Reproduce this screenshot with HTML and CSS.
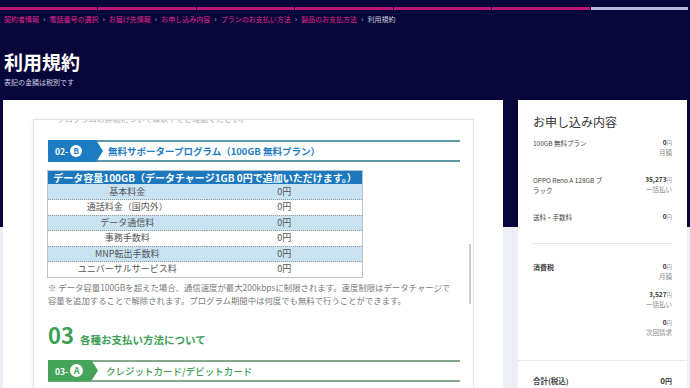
FILE: index.html
```html
<!DOCTYPE html>
<html lang="ja">
<head>
<meta charset="utf-8">
<title>利用規約</title>
<link rel="stylesheet" href="styles.css">
</head>
<body>
<header class="hero">
  <div class="progress">
    <span class="seg done"></span>
    <span class="seg done"></span>
    <span class="seg done"></span>
    <span class="seg done"></span>
    <span class="seg done"></span>
    <span class="seg done"></span>
    <span class="seg"></span>
  </div>
  <nav class="crumbs">
    <span class="crumb">契約者情報</span><span class="sep">›</span>
    <span class="crumb">電話番号の選択</span><span class="sep">›</span>
    <span class="crumb">お届け先情報</span><span class="sep">›</span>
    <span class="crumb">お申し込み内容</span><span class="sep">›</span>
    <span class="crumb">プランのお支払い方法</span><span class="sep">›</span>
    <span class="crumb">製品のお支払方法</span><span class="sep">›</span>
    <span class="crumb current">利用規約</span>
  </nav>
  <h1 class="title">利用規約</h1>
  <p class="subtitle">表記の金額は税別です</p>
</header>

<div class="layout">
  <main class="main-card">
    <div class="terms">
      <div class="cut"><p>プログラムの詳細については以下をご確認ください。</p></div>

      <div class="banner blue">
        <div class="tab"><span class="num">02-</span><span class="badge">B</span></div>
        <span class="banner-title">無料サポータープログラム（100GB 無料プラン）</span>
      </div>

      <table class="fees">
        <thead>
          <tr><th colspan="2">データ容量100GB（データチャージ1GB 0円で追加いただけます。）</th></tr>
        </thead>
        <tbody>
          <tr><td class="c1">基本料金</td><td>0円</td></tr>
          <tr><td class="c1">通話料金（国内外）</td><td>0円</td></tr>
          <tr><td class="c1">データ通信料</td><td>0円</td></tr>
          <tr><td class="c1">事務手数料</td><td>0円</td></tr>
          <tr><td class="c1">MNP転出手数料</td><td>0円</td></tr>
          <tr><td class="c1">ユニバーサルサービス料</td><td>0円</td></tr>
        </tbody>
      </table>

      <p class="note">※ データ容量100GBを超えた場合、通信速度が最大200kbpsに制限されます。速度制限はデータチャージで<br>容量を追加することで解除されます。プログラム期間中は何度でも無料で行うことができます。</p>

      <h2 class="section"><span class="sec-num">03</span><span class="sec-title">各種お支払い方法について</span></h2>

      <div class="banner green">
        <div class="tab"><span class="num">03-</span><span class="badge">A</span></div>
        <span class="banner-title">クレジットカード/デビットカード</span>
      </div>

      <div class="scroll-thumb"></div>
    </div>
  </main>

  <aside class="summary">
    <h3 class="sum-title">お申し込み内容</h3>
    <div class="items">
      <div class="row">
        <span class="label">100GB 無料プラン</span>
        <div class="price"><span class="amt"><b>0</b><small>円</small></span><span class="kind">月額</span></div>
      </div>
      <div class="row">
        <span class="label">OPPO Reno A 128GB ブ<br>ラック</span>
        <div class="price"><span class="amt"><b>35,273</b><small>円</small></span><span class="kind">一括払い</span></div>
      </div>
      <div class="row">
        <span class="label">送料・手数料</span>
        <div class="price"><span class="amt"><b>0</b><small>円</small></span></div>
      </div>
    </div>
    <div class="tax">
      <span class="label strong">消費税</span>
      <div class="prices">
        <div class="price"><span class="amt"><b>0</b><small>円</small></span><span class="kind">月額</span></div>
        <div class="price"><span class="amt"><b>3,527</b><small>円</small></span><span class="kind">一括払い</span></div>
        <div class="price"><span class="amt"><b>0</b><small>円</small></span><span class="kind">次回請求</span></div>
      </div>
    </div>
    <div class="total">
      <span class="label total-label">合計(税込)</span>
      <div class="price"><span class="amt big"><b>0</b><small>円</small></span><span class="kind">月額</span></div>
    </div>
  </aside>
</div>
</body>
</html>
```

FILE: styles.css
```css
* {
  box-sizing: border-box;
  margin: 0;
  padding: 0;
}

html,
body {
  width: 690px;
  height: 388px;
  overflow: hidden;
}

body {
  background: linear-gradient(#07053a 0, #07053a 227px, #eeeef6 227px);
  font-family: "Noto Sans CJK JP", "Noto Sans", sans-serif;
  color: #333;
}

/* ---------- header ---------- */
.hero {
  padding-top: 7px;
}

.progress {
  display: grid;
  grid-template-columns: repeat(7, 1fr);
  gap: 1px;
  width: 688px;
  height: 3px;
}

.seg {
  background: #b4b6dc;
}

.seg.done {
  background: #b91877;
}

.crumbs {
  display: flex;
  align-items: center;
  margin-top: 4px;
  padding-left: 4px;
  font-size: 7px;
  line-height: 10px;
  white-space: nowrap;
}

.crumb {
  color: #e2268e;
}

.crumb.current {
  color: #c8c8d8;
}

.sep {
  margin: 0 4px;
  color: #b0b0c4;
  font-size: 8px;
}

.title {
  margin-top: 26px;
  padding-left: 4px;
  font-size: 19px;
  line-height: 24px;
  font-weight: 700;
  color: #fff;
}

.subtitle {
  margin-top: 3px;
  padding-left: 4px;
  font-size: 7px;
  line-height: 10px;
  color: #d2d2e0;
}

/* ---------- layout ---------- */
.layout {
  display: flex;
  align-items: flex-start;
  gap: 15px;
  margin-top: 13px;
  padding-left: 3px;
}

.main-card {
  width: 500px;
  height: 300px;
  background: #fff;
  padding: 19px 29px 0 30px;
}

.terms {
  position: relative;
  height: 281px;
  overflow: hidden;
  border: 1px solid #e3e3e3;
  box-shadow: 0 0 3px rgba(0, 0, 0, 0.08);
  padding: 0 13px 0 14px;
}

.cut {
  height: 4px;
  overflow: hidden;
  padding-left: 9px;
}

.cut p {
  margin-top: -6px;
  font-size: 8px;
  line-height: 10px;
  color: #b0b0b0;
}

/* ---------- banners ---------- */
.banner {
  display: flex;
  align-items: center;
  height: 22px;
  border-top: 2px solid;
  border-bottom: 2px solid;
}

.banner.blue {
  margin-top: 16px;
  border-color: #5f97a8;
  --c: #1d7cc1;
}

.banner.green {
  margin-top: 8px;
  border-color: #86a98b;
  --c: #45a459;
}

.tab {
  align-self: stretch;
  margin: -2px 0;
  width: 55px;
  display: flex;
  align-items: center;
  padding-left: 7px;
  background: var(--c);
  clip-path: polygon(0 0, 48px 0, 55px 50%, 48px 100%, 0 100%);
}

.green .tab {
  width: 50px;
  padding-left: 7px;
  clip-path: polygon(0 0, 43px 0, 50px 50%, 43px 100%, 0 100%);
}

.num {
  color: #fff;
  font-size: 8.5px;
  font-weight: 700;
  line-height: 10px;
}

.badge {
  width: 12px;
  height: 12px;
  margin-left: 2px;
  border-radius: 50%;
  background: #fff;
  color: var(--c);
  font-size: 8px;
  font-weight: 700;
  line-height: 12px;
  text-align: center;
}

.green .badge {
  width: 13px;
  height: 13px;
  line-height: 13px;
  font-size: 8.5px;
}

.banner-title {
  margin-left: 5px;
  color: var(--c);
  font-size: 9.5px;
  font-weight: 700;
  line-height: 12px;
  white-space: nowrap;
}

.green .banner-title {
  margin-left: 8px;
  color: #3e9c51;
  font-weight: 500;
}

/* ---------- table ---------- */
.fees {
  margin-top: 8px;
  margin-left: -1px;
  width: 316px;
  border-collapse: collapse;
  border: 1px solid #b9c3ca;
  color: #555;
}

.fees th {
  height: 13px;
  padding: 0;
  background: #1b78bf;
  color: #fff;
  font-size: 10px;
  font-weight: 700;
  line-height: 13px;
  text-align: center;
  white-space: nowrap;
}

.fees td {
  height: 15.5px;
  padding: 0;
  font-size: 9px;
  line-height: 12px;
  text-align: center;
  border-bottom: 1px dotted #9a9a9a;
}

.fees .c1 {
  width: 159px;
}

.fees tbody tr:nth-child(odd) td {
  background: #c9e2f2;
}

.fees tbody tr:nth-child(even) td {
  background: #fff;
}

.note {
  margin-top: 3px;
  font-size: 8.4px;
  line-height: 13.5px;
  color: #7a7a7a;
  white-space: nowrap;
}

/* ---------- section heading ---------- */
.section {
  display: flex;
  align-items: baseline;
  margin-top: 14px;
  line-height: 24px;
}

.sec-num {
  font-size: 22px;
  font-weight: 700;
  color: #3d9f55;
}

.sec-title {
  margin-left: 6px;
  font-size: 10.5px;
  font-weight: 700;
  color: #3d9f55;
}

.scroll-thumb {
  position: absolute;
  right: 2px;
  top: 124px;
  width: 2px;
  height: 60px;
  background: #cdcdcd;
}

/* ---------- summary ---------- */
.summary {
  width: 169px;
  height: 300px;
  background: #fff;
  padding-top: 14px;
}

.sum-title {
  padding: 0 15px;
  font-size: 12px;
  line-height: 16px;
  font-weight: 400;
  color: #333;
}

.items {
  margin: 8px 15px 0;
  border-bottom: 1px solid #e6e6ea;
}

.row {
  display: flex;
  justify-content: space-between;
  align-items: flex-start;
  min-height: 37px;
}

.row:last-child {
  min-height: 31px;
}

.label {
  font-size: 6.5px;
  line-height: 10px;
  color: #444;
}

.label.strong {
  font-weight: 700;
  font-size: 7px;
}

.price {
  display: flex;
  flex-direction: column;
  align-items: flex-end;
  font-size: 6.5px;
  line-height: 9px;
}

.amt b {
  font-weight: 700;
  color: #333;
}

.amt small {
  font-size: 5.5px;
  color: #999;
}

.kind {
  color: #888;
}

.tax {
  display: flex;
  justify-content: space-between;
  align-items: flex-start;
  padding: 18px 15px 23px;
  border-bottom: 1px solid #e6e6ea;
}

.prices {
  display: flex;
  flex-direction: column;
  gap: 9px;
}

.total {
  display: flex;
  justify-content: space-between;
  align-items: flex-start;
  padding: 14px 15px 0;
}

.total-label {
  font-size: 7.5px;
  line-height: 11px;
  font-weight: 700;
}

.amt.big {
  font-size: 8px;
  line-height: 11px;
}

.amt.big small {
  font-size: 7px;
  color: #333;
  font-weight: 700;
}
```
